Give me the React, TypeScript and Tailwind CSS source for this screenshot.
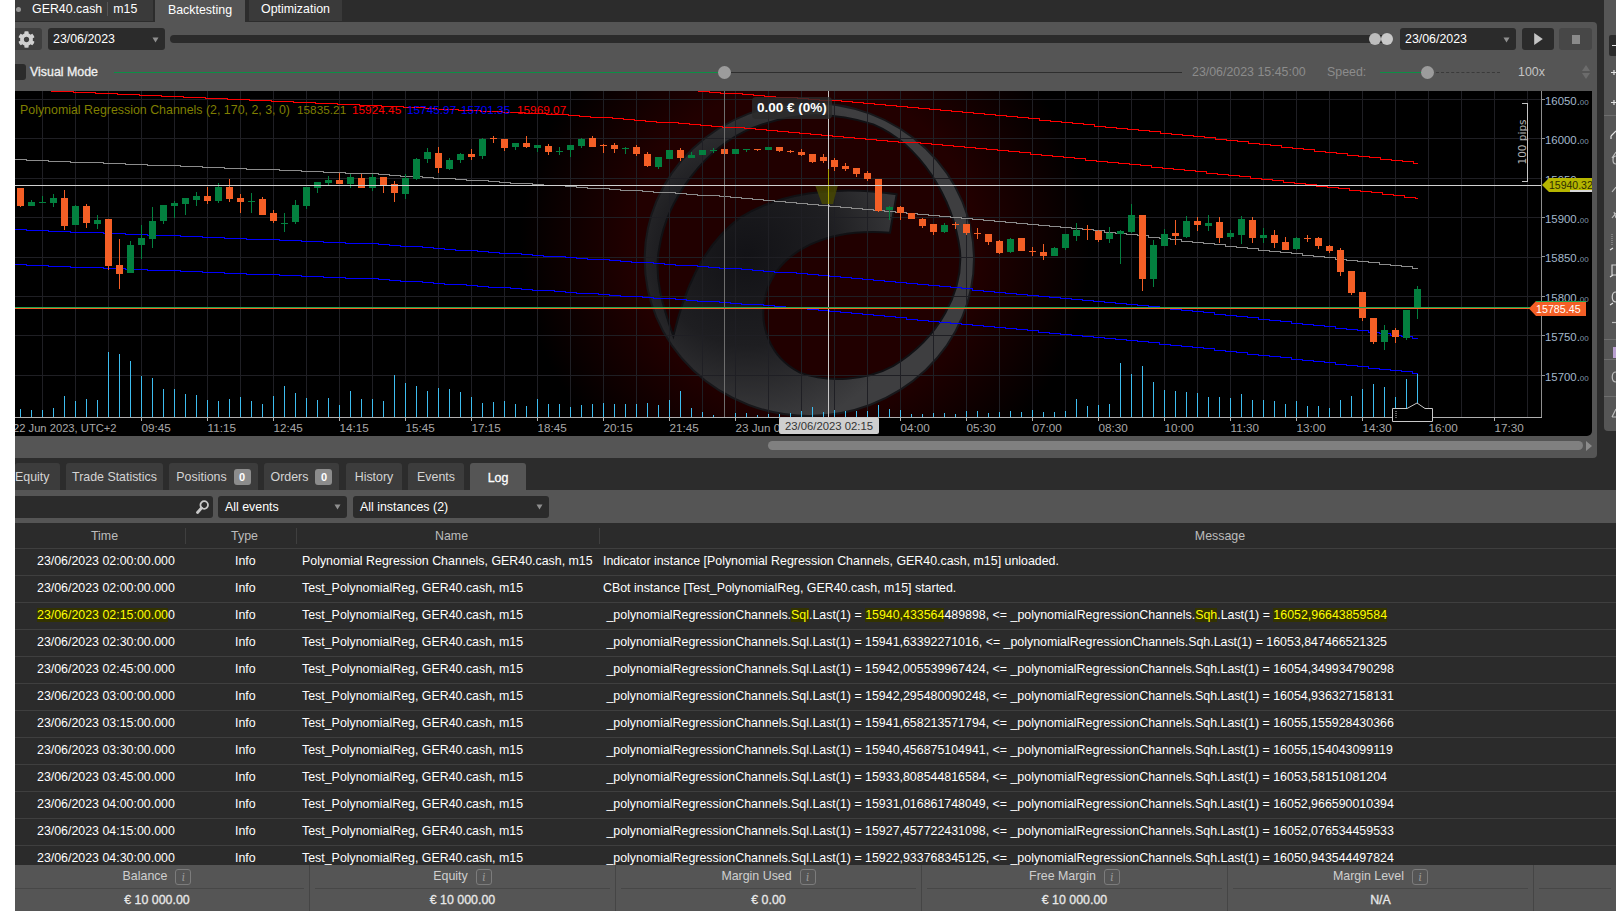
import { Fragment, type ReactNode } from "react";
import { FaCog } from "react-icons/fa";

type Candle = [number, number, number, number, number];

const ORANGE = "#f45f26";
const GREEN = "#03803f";

// g/o flag, body top, body bottom, wick top, wick bottom (zoomed units)
const candlesA: Candle[] = [
  [0,174,228,174,231],[1,216,228,210,228],[1,216,219,198,219],[1,204,219,192,231],[0,204,288,180,300],[1,228,285,225,285],[0,228,279,222,294],[1,270,282,255,297],
  [0,267,408,267,420],[0,405,432,327,477],[1,345,429,333,429],[1,324,345,285,387],[1,273,327,231,354],[1,225,273,225,282],[1,219,228,213,264],[1,204,222,204,255],
  [1,198,210,186,228],[0,198,213,171,222],[1,171,213,159,219],[0,171,207,147,216],[0,204,216,192,249],[1,213,216,189,249],[0,207,255,201,255],[0,249,273,240,279],
  [1,279,282,249,306],[1,225,276,210,282],[1,171,228,171,237],[1,156,174,156,189],[1,150,159,138,165],[0,150,162,129,162],[1,141,162,132,174],[0,144,174,132,174],
  [1,141,174,132,183],[0,141,165,141,189],[0,162,189,153,216],[1,144,192,132,207],[1,87,147,84,150],[1,66,87,54,99],[0,69,114,51,129],[1,90,117,84,120],
  [1,72,90,69,99],[0,72,81,57,90],[1,27,78,24,87],[0,24,27,18,39],[0,27,54,27,63],[1,39,51,39,60],[0,39,51,18,54],[1,45,54,45,66],
  [0,48,66,42,75],[1,63,66,51,75],[1,45,60,45,81],[1,27,48,24,54],[0,24,51,18,51],[0,44,46,42,69],[0,45,57,39,69],[1,53,56,51,72],
  [0,51,72,45,78],[0,72,108,66,111],[1,81,111,81,117],[1,60,87,60,87],[0,60,84,54,93],[1,75,84,66,84],[1,60,75,60,75],[1,60,63,54,69],
  [0,57,72,57,72],[1,57,72,57,72],[1,57,60,57,66],[0,57,60,57,63],[1,51,60,51,60],[0,51,63,51,66],[0,63,66,60,69],[0,66,75,57,78],
  [0,72,96,72,99],[0,81,93,72,99],[0,90,111,84,123],[0,108,117,99,123],[0,114,132,114,141],[0,129,147,123,153],[0,147,243,147,246],[1,231,240,228,270],
  [0,231,249,228,270],[0,249,267,249,267],[0,267,288,264,294],[0,282,306,282,315],[1,285,306,279,309],[0,282,285,276,297],[0,282,309,282,315],[0,309,312,294,327],
  [0,312,336,312,345],[0,333,369,330,372],[1,327,366,324,369],[0,324,363,324,363],[0,363,366,351,378],[0,366,378,342,390],[1,354,378,351,378],
];
const candlesB: Candle[] = [
  [1,132,174,132,180],[1,120,138,99,153],[0,117,120,105,150],[0,123,150,120,156],[1,129,147,111,159],[1,123,132,120,222],[1,75,126,42,129],[0,75,267,75,303],
  [1,165,267,150,291],[1,132,168,117,168],[0,129,138,90,165],[1,93,141,78,144],[0,93,105,81,123],[1,99,108,75,123],[0,96,144,81,159],[1,129,141,120,147],
  [1,87,135,78,162],[0,90,144,81,159],[1,135,144,114,159],[0,135,159,120,174],[0,156,180,141,180],[1,144,177,141,180],[0,144,147,135,156],[0,144,168,141,177],
  [0,168,183,165,189],[0,180,246,174,258],[0,243,309,243,315],[0,306,384,306,393],[0,384,456,384,462],[1,420,456,405,480],[0,420,441,414,459],[1,360,444,360,450],[1,297,354,288,387],
];
const candles = [
  ...candlesA.map((c) => ({ g: c[0] === 1, bt: 130 + c[1] / 3, bb: 130 + c[2] / 3, wt: 130 + c[3] / 3, wb: 130 + c[4] / 3 })),
  ...candlesB.map((c) => ({ g: c[0] === 1, bt: 190 + c[1] / 3, bb: 190 + c[2] / 3, wt: 190 + c[3] / 3, wb: 190 + c[4] / 3 })),
];

const volumes = [
  ...[507,510,510,504,468,483,477,480,336,342,363,408,414,447,447,462,465,480,483,477,471,483,492,468,438,459,474,480,474,495,453,477,477,483,405,429,438,453,444,447,456,471,489,486,483,492,498,477,492,492,501,495,492,489,492].map((t) => (532 - t) / 3),
  ...[940,938,936,942,927,900,951,963,972,963,966,966,972,968,968,966,960,948,963,957,960,960,960,942,954,957,968,968,966,966,968,960,960,966].map((t) => (978 - t) / 3),
  ...[516,513,517,511,516,516,513,477,498,497,492,369,402,378,426,450,453,456,459,471,471,474,462,480,480,483,492,483,498,498,504,480,468,447,432,441,471,417,400].map((t) => (532 - t) / 3),
];

const candleX = (k: number) => 20.5 + 11 * k;

function stepPath(pts: [number, number][]) {
  const yAt = (x: number) => {
    for (let i = 1; i < pts.length; i++) {
      if (x <= pts[i][0]) {
        const [x0, y0] = pts[i - 1];
        const [x1, y1] = pts[i];
        return y0 + ((x - x0) / (x1 - x0)) * (y1 - y0);
      }
    }
    return pts[pts.length - 1][1];
  };
  const start = pts[0][0];
  const end = pts[pts.length - 1][0];
  let d = `M${start} ${Math.round(yAt(start)) + 0.5}`;
  for (let x = start + 11; x < end; x += 11) {
    const y = Math.round(yAt(x)) + 0.5;
    d += `H${x}V${y}`;
  }
  return d + `H${end}`;
}

const gridX = Array.from({ length: 46 }, (_, i) => 42.3 + 33 * i);
const priceY = [99.3, 138.6, 178, 217.7, 257, 296.7, 335.7, 375.3];
const prices = [
  ["16050", 99],
  ["16000", 138],
  ["15900", 217],
  ["15850", 256],
  ["15800", 296],
  ["15750", 335],
  ["15700", 375],
] as const;
const times: [string, number][] = [
  ["09:45", 141.5], ["11:15", 207.5], ["12:45", 273.5], ["14:15", 339.5], ["15:45", 405.5], ["17:15", 471.5], ["18:45", 537.5], ["20:15", 603.5], ["21:45", 669.5],
  ["23 Jun 0", 735.5], ["04:00", 900.5], ["05:30", 966.5], ["07:00", 1032.5], ["08:30", 1098.5], ["10:00", 1164.5], ["11:30", 1230.5], ["13:00", 1296.5], ["14:30", 1362.5], ["16:00", 1428.5], ["17:30", 1494.5],
];

function Chart() {
  return (
    <svg width={1577} height={345} viewBox="15 91 1577 345" className="block">
      <defs>
        <radialGradient id="glow" gradientUnits="userSpaceOnUse" cx={0} cy={0} r={1} gradientTransform="translate(805 245) scale(285 270)">
          <stop offset="0.6" stopColor="#220000" />
          <stop offset="1" stopColor="#000000" />
        </radialGradient>
        <radialGradient id="ring" gradientUnits="userSpaceOnUse" cx={380} cy={500} r={530}>
          <stop offset="0" stopColor="#121216" />
          <stop offset="0.5" stopColor="#1e1e21" />
          <stop offset="1" stopColor="#3e3e40" />
        </radialGradient>
      </defs>
      <rect x={15} y={91} width={1577} height={345} fill="#000" />
      <rect x={500} y={91} width={620} height={326} fill="url(#glow)" />

      {/* watermark */}
      <g transform="translate(620 91) scale(0.3333)">
        <ellipse cx={568} cy={505} rx={494} ry={470} fill="url(#ring)" stroke="#17171a" strokeWidth={6} />
        <path
          d="M160 735C130 650 100 560 118 470C140 330 250 170 400 110C520 62 640 62 760 100C900 160 1000 320 1020 480C1030 600 960 740 820 825C740 870 620 875 540 845C450 800 410 700 440 600C480 480 620 410 810 425L830 310C640 280 470 310 360 380C240 470 190 610 160 735Z"
          fill="#210000"
          stroke="#111114"
          strokeWidth={6}
        />
      </g>

      {/* grid */}
      <g stroke="#1f1f24" strokeWidth={1} shapeRendering="crispEdges">
        {gridX.map((x) => <line key={x} x1={x} x2={x} y1={91} y2={417} />)}
        {priceY.map((y) => <line key={y} x1={15} x2={1541} y1={y} y2={y} />)}
      </g>

      {/* volume */}
      <g stroke="#3dbdf0" strokeWidth={1} shapeRendering="crispEdges">
        {volumes.map((h, k) => <line key={k} x1={candleX(k)} x2={candleX(k)} y1={417 - h} y2={417} />)}
      </g>

      {/* channels */}
      <g fill="none" strokeWidth={1} shapeRendering="crispEdges">
        <path d={stepPath([[15, 159.3], [365, 173.3], [715, 195.7], [1065, 227], [1418, 268.3]])} stroke="#8c8c8c" />
        <path d={stepPath([[698, 91], [831, 100.5], [990, 114.3], [1198, 136.7], [1418, 163.3]])} stroke="#ff0000" />
        <path d={stepPath([[51, 90.7], [561, 114.3], [724, 126.7], [800, 133.3], [990, 149.3], [1198, 171.7], [1312, 185], [1418, 198.3]])} stroke="#ff0000" />
        <path d={stepPath([[15, 229.3], [365, 243.3], [800, 273.3], [1154, 306.7], [1372, 332], [1418, 338.7]])} stroke="#0000ff" />
        <path d={stepPath([[15, 264.3], [365, 278.3], [786, 306.7], [1164, 344], [1418, 373.3]])} stroke="#0000ff" />
      </g>

      {/* candles */}
      {candles.map((c, k) => {
        const x = candleX(k);
        const col = c.g ? GREEN : ORANGE;
        return (
          <g key={k} shapeRendering="crispEdges">
            <line x1={x} x2={x} y1={c.wt} y2={c.wb} stroke={col} />
            <rect x={x - 3.5} y={c.bt} width={7} height={Math.max(1, c.bb - c.bt)} fill={col} />
          </g>
        );
      })}

      {/* crosshair and price lines */}
      <path d="M815 185L838 185L833 204L822 204Z" fill="#4a4a00" fillOpacity={0.8} />
      <line x1={828.5} x2={828.5} y1={169} y2={204} stroke="#a3a300" strokeWidth={1} />
      <g shapeRendering="crispEdges">
        <line x1={724.5} x2={724.5} y1={91} y2={417} stroke="#6e6e6e" />
        <line x1={828.5} x2={828.5} y1={91} y2={169} stroke="#c8c8c8" />
        <line x1={828.5} x2={828.5} y1={204} y2={417} stroke="#c8c8c8" />
        <line x1={15} x2={1541} y1={185.5} y2={185.5} stroke="#d0d0d0" />
        <line x1={15} x2={1530} y1={307.5} y2={307.5} stroke="#1fa64f" />
        <line x1={15} x2={1530} y1={308.5} y2={308.5} stroke={ORANGE} />
      </g>

      {/* 100 pips ruler */}
      <path d="M1522 103.5H1527.5V181.5H1522" fill="none" stroke="#c4c4c4" shapeRendering="crispEdges" />
      <text x={0} y={0} transform="translate(1526 142) rotate(-90)" textAnchor="middle" fontSize={10.5} fill="#b4b4b4" style={{ fontFamily: "'DejaVu Sans', sans-serif" }}>100 pips</text>

      {/* legend */}
      <text y={114} fontSize={12.4}>
        <tspan x={20} fill="#7f7f00">Polynomial Regression Channels (2, 170, 2, 3, 0)</tspan>
      </text>
      <text y={114} fontSize={11.8}>
        <tspan x={297} fill="#7f7f00">15835.21</tspan>
        <tspan x={352} fill="#ff0000">15924.45</tspan>
        <tspan x={407} fill="#0000ff">15745.97</tspan>
        <tspan x={461} fill="#0000ff">15701.35</tspan>
        <tspan x={517} fill="#ff0000">15969.07</tspan>
      </text>

      {/* axes */}
      <g shapeRendering="crispEdges">
        <line x1={1541.5} x2={1541.5} y1={91} y2={417} stroke="#8f8f8f" />
        <line x1={15} x2={1542} y1={417.5} y2={417.5} stroke="#b0b0b0" />
        {times.map(([, x]) => <line key={x} x1={x} x2={x} y1={417} y2={421} stroke="#b0b0b0" />)}
      </g>
      {prices.map(([p, y]) => (
        <Fragment key={p}>
          <line x1={1541} x2={1545} y1={y + 0.5} y2={y + 0.5} stroke="#8f8f8f" />
          <text x={1545} y={y + 6} fontSize={11.4} fill="#a3b8cc">
            {p}.<tspan fontSize={8} fill="#7f93a6">00</tspan>
          </text>
        </Fragment>
      ))}
      <text x={1545} y={184} fontSize={11.4} fill="#a3b8cc">15950</text>
      <text x={13} y={432} fontSize={11.2} fill="#a8a8a8">22 Jun 2023, UTC+2</text>
      {times.map(([t, x]) => (
        <text key={t} x={x} y={432} fontSize={11.7} fill="#a8a8a8">{t}</text>
      ))}

      {/* scroll handle */}
      <path d="M1392.5 421.5V408.5H1407L1417 403L1425 408.5H1432.5V421.5Z" fill="#000" stroke="#c8c8c8" />
      <path d="M1396 411V419" stroke="#c8c8c8" strokeDasharray="1 1" />

      {/* price tags */}
      <rect x={1592} y={170} width={10} height={16} fill="#4a4a00" />
      <path d="M1542 185L1549 178H1592V192H1549Z" fill="#b5b500" />
      <rect x={1570} y={190} width={22} height={2} fill="#d8d8d8" />
      <text x={1549} y={189} fontSize={10.5} fill="#2d2d00">15940.32</text>
      <path d="M1529 308.5L1536 301H1586V316H1536Z" fill={ORANGE} />
      <rect x={1536} y={301} width={50} height={1} fill="#1fa64f" />
      <text x={1536} y={312.5} fontSize={10.7} fill="#fff">15785.45</text>

      {/* hovered time */}
      <rect x={779} y={417} width={100} height={17} rx={2} fill="#cfcfcf" />
      <text x={829} y={430} fontSize={11.3} textAnchor="middle" fill="#333">23/06/2023 02:15</text>
    </svg>
  );
}

function Caret() {
  return (
    <svg width={7} height={6} viewBox="0 0 7 6" className="shrink-0">
      <path d="M0.5 0.5H6.5L3.5 5.5Z" fill="#8f8f8f" />
    </svg>
  );
}

function Select({ label, className }: { label: string; className: string }) {
  return (
    <div className={`flex h-[22px] items-center justify-between rounded-[3px] bg-[#2b2b2b] pr-[6px] pt-px text-white ${className}`}>
      <span>{label}</span>
      <Caret />
    </div>
  );
}

function Tab({ children, active, className }: { children: ReactNode; active?: boolean; className: string }) {
  return (
    <div className={`flex h-[27px] items-center justify-center gap-[7px] rounded-t-[3px] ${active ? "bg-[#555555] pt-[3px] text-white [-webkit-text-stroke:0.3px]" : "bg-[#3c3c3c] pt-px text-[#d4d4d4]"} ${className}`}>
      {children}
    </div>
  );
}

function Badge({ n }: { n: number }) {
  return <span className="flex h-[16px] w-[17px] items-center justify-center rounded-[3px] bg-[#8c8c8c] text-[11px] font-bold text-white">{n}</span>;
}

const HL = ({ children }: { children: ReactNode }) => <span className="bg-[#333300] text-[#ffff00]">{children}</span>;

const PREFIX = "_polynomialRegressionChannels";
const TEST = "Test_PolynomialReg, GER40.cash, m15";
const rows: [string, string, string][] = [
  ["02:30", "15941,63392271016", "16053,847466521325"],
  ["02:45", "15942,005539967424", "16054,349934790298"],
  ["03:00", "15942,295480090248", "16054,936327158131"],
  ["03:15", "15941,658213571794", "16055,155928430366"],
  ["03:30", "15940,456875104941", "16055,154043099119"],
  ["03:45", "15933,808544816584", "16053,58151081204"],
  ["04:00", "15931,016861748049", "16052,966590010394"],
  ["04:15", "15927,457722431098", "16052,076534459533"],
  ["04:30", "15922,933768345125", "16050,943544497824"],
];

function Row({ time, name, children }: { time: ReactNode; name: string; children: ReactNode }) {
  return (
    <div className="grid h-[27px] shrink-0 grid-cols-[171px_111px_303px_1fr] items-center border-t border-[#3f3f3f] pb-[2px] text-white">
      <div className="pl-[22px] whitespace-nowrap">{time}</div>
      <div className="pl-[49px]">Info</div>
      <div className="pl-[5px] whitespace-nowrap">{name}</div>
      <div className="pl-[3px] whitespace-pre">{children}</div>
    </div>
  );
}

const stats: [string, string][] = [
  ["Balance", "€ 10 000.00"],
  ["Equity", "€ 10 000.00"],
  ["Margin Used", "€ 0.00"],
  ["Free Margin", "€ 10 000.00"],
  ["Margin Level", "N/A"],
  ["", ""],
];

function SideIcons() {
  return (
    <svg width={12} height={431} viewBox="1604 0 12 431" className="block">
      <rect x={1609} y={35} width={8} height={21} rx={2} fill="#2b2b2b" />
      <g stroke="#e4e4e4" strokeWidth={1.2} fill="none">
        <path d="M1612 45.5H1616M1611 72.5H1616M1614 70V75M1611 102.5H1616M1614 100V105" />
        <path d="M1616 131L1611 136M1611 136V139" />
        <path d="M1616 156C1612 156 1612 164 1616 164M1612 158L1616 152" stroke="#bdbdbd" />
        <path d="M1612 192L1616 187M1612 218L1616 213M1614 212L1616 218" stroke="#bdbdbd" />
        <path d="M1612 234V246" strokeDasharray="1 1" stroke="#9a9a9a" />
        <path d="M1610 250L1613 248M1610 277L1613 275M1610 305L1613 303" />
        <path d="M1616 265H1612V275H1616" stroke="#d0d0d0" />
        <path d="M1616 292C1611 292 1611 302 1616 302" stroke="#d0d0d0" />
        <path d="M1612 322.5H1616" stroke="#bdbdbd" />
        <path d="M1616 372C1611 372 1611 382 1616 382" stroke="#bdbdbd" />
        <path d="M1612 417L1616 409M1612 417H1616" stroke="#bdbdbd" />
      </g>
      <g stroke="#6e6e6e" shapeRendering="crispEdges">
        <path d="M1604 115.5H1616M1604 339.5H1616M1604 359.5H1616M1604 396.5H1616" />
      </g>
      <rect x={1613} y={347} width={3} height={11} fill="#b9a0d0" />
    </svg>
  );
}

export default function App() {
  return (
    <div className="flex h-[911px] w-[1616px] overflow-hidden bg-white text-[12.4px] leading-none [font-family:'Liberation_Sans',sans-serif]">
      <div className="w-[15px] shrink-0" />
      <div className="flex min-w-0 flex-1 flex-col bg-[#2c2c2c]">
        {/* top part */}
        <div className="flex h-[463px] shrink-0 gap-[7px]">
          <div className="w-[1582px] shrink-0">
            {/* instrument tabs */}
            <div className="flex h-[22px] items-start gap-[2px]">
              <div className="flex h-[21px] w-[138px] items-center bg-[#3a3a3a] pb-[3px] text-white">
                <span className="ml-px mr-[11px] h-[5px] w-[5px] rounded-full bg-[#9a9a9a]" />
                <span>GER40.cash</span>
                <span className="mx-[5px] h-[14px] w-px bg-[#555555]" />
                <span>m15</span>
              </div>
              <div className="flex h-[22px] w-[90px] items-center justify-center bg-[#555555] pb-[2px] text-white">Backtesting</div>
              <div className="ml-[2px] flex h-[21px] w-[93px] items-center justify-center bg-[#3a3a3a] pb-[3px] text-white">Optimization</div>
            </div>

            <div className="h-[436px] overflow-hidden rounded-tr-[4px] rounded-br-[4px] bg-[#555555]">
              {/* range row */}
              <div className="flex h-[34px] items-center">
                <div className="flex h-[22px] w-[27px] items-center justify-center rounded-r-[3px] bg-[#3f3f3f] pr-[4px] text-[#d0d0d0]">
                  <FaCog size={17} />
                </div>
                <Select label="23/06/2023" className="ml-[6px] w-[117px] pl-[5px]" />
                <div className="relative ml-[5px] h-[8px] w-[1217px] rounded-full bg-[#2b2b2b]">
                  <span className="absolute right-[6px] top-[-2px] h-[12px] w-[12px] rounded-full bg-[#bdbdbd]" />
                  <span className="absolute right-[-6px] top-[-2px] h-[12px] w-[12px] rounded-full bg-[#c8c8c8]" />
                </div>
                <Select label="23/06/2023" className="ml-[13px] w-[116px] pl-[5px]" />
                <div className="ml-[6px] flex h-[22px] w-[32px] items-center justify-center rounded-[3px] bg-[#2b2b2b]">
                  <svg width={9} height={12} viewBox="0 0 10 14"><path d="M0 0L10 7L0 14Z" fill="#c4c4c4" /></svg>
                </div>
                <div className="ml-[5px] flex h-[22px] w-[33px] items-center justify-center rounded-[3px] bg-[#474747]">
                  <span className="h-[9px] w-[8px] bg-[#8a8a8a]" />
                </div>
              </div>

              {/* visual mode row */}
              <div className="flex h-[35px] items-center pb-[3px] text-[#8c8c8c]">
                <span className="h-[16px] w-[11px] rounded-r-[3px] bg-[#2b2b2b]" />
                <span className="ml-[4px] w-[84px] text-[#f0f0f0] [-webkit-text-stroke:0.3px]">Visual Mode</span>
                <div className="relative h-px w-[1068px] bg-[#2e2e2e]">
                  <div className="h-px w-[611px] bg-[#0c8f46]" />
                  <span className="absolute left-[604px] top-[-6px] h-[13px] w-[13px] rounded-full bg-[#9c9c9c]" />
                </div>
                <span className="ml-[10px] w-[135px]">23/06/2023 15:45:00</span>
                <span className="w-[53px]">Speed:</span>
                <div className="relative h-px w-[120px] border-t border-dashed border-[#3a3a3a]">
                  <div className="absolute left-0 top-[-1px] h-px w-[47px] bg-[#0c8f46]" />
                  <span className="absolute left-[41px] top-[-7px] h-[13px] w-[13px] rounded-full bg-[#9c9c9c]" />
                </div>
                <span className="ml-[18px] text-[#c4c4c4]">100x</span>
                <div className="ml-[37px] flex flex-col gap-[2px]">
                  <svg width={8} height={6} viewBox="0 0 8 6"><path d="M4 0L8 6H0Z" fill="#6c6c6c" /></svg>
                  <svg width={8} height={6} viewBox="0 0 8 6"><path d="M0 0H8L4 6Z" fill="#6c6c6c" /></svg>
                </div>
              </div>

              <div className="relative w-[1577px] overflow-hidden rounded-br-[5px]">
                <Chart />
                <div className="absolute left-[737px] top-[6px] rounded-[4px] bg-[#2a2a2a]/80 px-[5px] py-[4px] text-[13.5px] font-bold text-white">0.00 € (0%)</div>
              </div>

              {/* chart scrollbar */}
              <div className="flex h-[22px] items-start pt-[5px]">
                <div className="ml-[753px] h-[9px] w-[815px] rounded-full bg-[#808080]" />
                <svg width={6} height={10} viewBox="0 0 6 10" className="ml-[3px]"><path d="M0 0L6 5L0 10Z" fill="#8c8c8c" /></svg>
              </div>
            </div>
          </div>

          <div className="h-[431px] w-[12px] shrink-0 rounded-bl-[4px] bg-[#565656]">
            <SideIcons />
          </div>
        </div>

        {/* bottom tabs */}
        <div className="flex h-[27px] shrink-0 items-start">
          <Tab className="w-[45px] justify-start">Equity</Tab>
          <Tab className="ml-[6px] w-[97px]">Trade Statistics</Tab>
          <Tab className="ml-[6px] w-[89px]">Positions <Badge n={0} /></Tab>
          <Tab className="ml-[6px] w-[75px]">Orders <Badge n={0} /></Tab>
          <Tab className="ml-[7px] w-[56px]">History</Tab>
          <Tab className="ml-[6px] w-[56px]">Events</Tab>
          <Tab active className="ml-[6px] w-[56px]">Log</Tab>
        </div>

        {/* filters */}
        <div className="flex h-[33px] shrink-0 items-center bg-[#555555]">
          <div className="flex h-[22px] w-[198px] items-center justify-end rounded-r-[3px] bg-[#2b2b2b] pr-[4px]">
            <svg width={13} height={14} viewBox="0 0 13 14" fill="none" stroke="#c8c8c8">
              <circle cx={8.2} cy={5} r={3.8} strokeWidth={1.8} />
              <path d="M5.5 8L1.5 12.5" strokeWidth={2.8} strokeLinecap="round" />
            </svg>
          </div>
          <Select label="All events" className="ml-[5px] w-[129px] pl-[7px]" />
          <Select label="All instances (2)" className="ml-[6px] w-[196px] pl-[7px]" />
        </div>

        {/* log table */}
        <div className="flex min-h-0 flex-1 flex-col overflow-hidden bg-[#2b2b2b]">
          <div className="grid h-[25px] shrink-0 grid-cols-[171px_111px_303px_1fr] items-center text-center text-[#bcbcbc]">
            <div className="h-[16px] border-r border-[#3f3f3f] pl-[9px] pt-[2px]">Time</div>
            <div className="h-[16px] border-r border-[#3f3f3f] pl-[7px] pt-[2px]">Type</div>
            <div className="h-[16px] border-r border-[#3f3f3f] pl-[7px] pt-[2px]">Name</div>
            <div className="h-[16px] pl-[224px] pt-[2px]">Message</div>
          </div>
          <Row time="23/06/2023 02:00:00.000" name="Polynomial Regression Channels, GER40.cash, m15">
            Indicator instance [Polynomial Regression Channels, GER40.cash, m15] unloaded.
          </Row>
          <Row time="23/06/2023 02:00:00.000" name={TEST}>
            CBot instance [Test_PolynomialReg, GER40.cash, m15] started.
          </Row>
          <Row time={<><HL>23/06/2023 02:15:00.00</HL>0</>} name={TEST}>
            {" "}{PREFIX}.<HL>Sql</HL>.Last(1) = <HL>15940,433564</HL>489898, {"<="} {PREFIX}.<HL>Sqh</HL>.Last(1) = <HL>16052,96643859584</HL>
          </Row>
          {rows.map(([t, a, b]) => (
            <Row key={t} time={`23/06/2023 ${t}:00.000`} name={TEST}>
              {` ${PREFIX}.Sql.Last(1) = ${a}, <= ${PREFIX}.Sqh.Last(1) = ${b}`}
            </Row>
          ))}
        </div>

        {/* account summary */}
        <div className="grid h-[46px] shrink-0 grid-cols-[295px_306px_306px_306px_306px_1fr] bg-[#555555]">
          {stats.map(([label, value], i) => (
            <div key={i} className={`flex flex-col ${i < 5 ? "border-r border-[#454545]" : ""}`}>
              <div className={`flex h-[23px] items-center justify-center gap-[8px] text-[#cfcfcf] ${i === 0 ? "pr-[10px]" : ""}`}>
                {label}
                {label && (
                  <span className="flex h-[16px] w-[16px] items-center justify-center rounded-[3px] border border-[#7c7c7c] font-serif text-[12px] italic text-[#9a9a9a]">i</span>
                )}
              </div>
              <div className={`border-t border-[#474747] ${i === 0 ? "mr-[5px]" : "mx-[5px]"}`} />
              <div className={`flex flex-1 items-center justify-center text-[#e8e8e8] [-webkit-text-stroke:0.3px] ${i === 0 ? "pr-[10px]" : ""}`}>{value}</div>
            </div>
          ))}
        </div>
      </div>
    </div>
  );
}
